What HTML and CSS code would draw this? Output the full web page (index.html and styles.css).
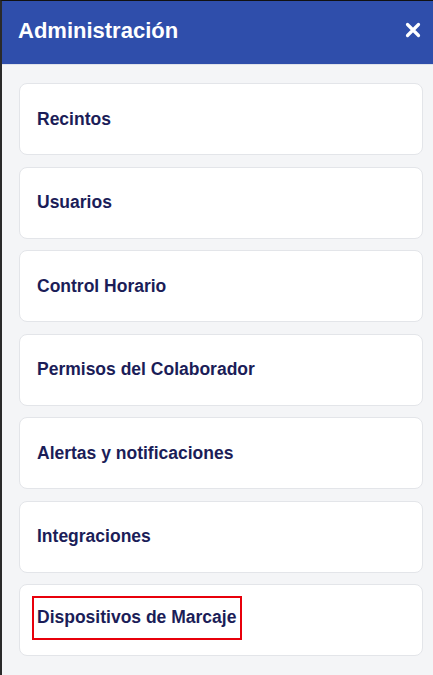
FILE: index.html
```html
<!DOCTYPE html>
<html lang="es">

<head>
    <meta charset="UTF-8">
    <meta name="viewport" content="width=device-width, initial-scale=1.0">
    <title>Administración</title>
    <link rel="stylesheet" href="styles.css">
</head>

<body>
    <div class="panel">
        <div class="panel-header">
            <h1 class="panel-title">Administración</h1>
            <button class="close-btn" aria-label="Cerrar">
                <svg width="16" height="16" viewBox="0 0 16 16">
                    <path d="M2.5 2.5 L13.5 13.5 M13.5 2.5 L2.5 13.5" stroke="#fff" stroke-width="3.2" stroke-linecap="round" fill="none"/>
                </svg>
            </button>
        </div>

        <div class="menu">
            <a class="menu-item" href="#"><span>Recintos</span></a>
            <a class="menu-item" href="#"><span>Usuarios</span></a>
            <a class="menu-item" href="#"><span>Control Horario</span></a>
            <a class="menu-item" href="#"><span>Permisos del Colaborador</span></a>
            <a class="menu-item" href="#"><span>Alertas y notificaciones</span></a>
            <a class="menu-item" href="#"><span>Integraciones</span></a>
            <a class="menu-item active" href="#"><span>Dispositivos de Marcaje</span></a>
        </div>
    </div>
</body>

</html>
```

FILE: styles.css
```css
body {
    font-family: "Liberation Sans", Arial, sans-serif;
    margin: 0;
    padding: 0;
    background-color: #f4f5f7;
}

.panel {
    height: 674px;
    border-top: 1px solid #111;
    border-left: 2px solid #2a2a2a;
    background-color: #f4f5f7;
    overflow: hidden;
}

.panel-header {
    height: 63px;
    background-color: #2f4eab;
    border-bottom: 1px solid #dfe2ea;
    display: flex;
    align-items: center;
    justify-content: space-between;
    padding: 0 10px 0 16px;
}

.panel-title {
    margin: 0;
    color: #fff;
    font-size: 22px;
    font-weight: bold;
    padding-bottom: 3px;
}

.close-btn {
    background: none;
    border: none;
    padding: 0;
    width: 20px;
    height: 20px;
    display: flex;
    align-items: center;
    justify-content: center;
    cursor: pointer;
    margin-bottom: 6px;
}

.menu {
    display: flex;
    flex-direction: column;
    gap: 11.5px;
    padding: 18px 10px 0 17px;
}

.menu-item {
    display: flex;
    align-items: center;
    height: 70px;
    padding: 0 17px;
    background-color: #fff;
    border: 1px solid #e3e5e9;
    border-radius: 8px;
    text-decoration: none;
    color: #1b1d58;
    font-size: 17.5px;
    font-weight: bold;
}

/* highlighted entry */
.menu-item.active span {
    border: 2px solid #e8000b;
    padding: 9px 4px 10px 3.5px;
    margin-left: -5.5px;
    margin-bottom: 4px;
}
```
